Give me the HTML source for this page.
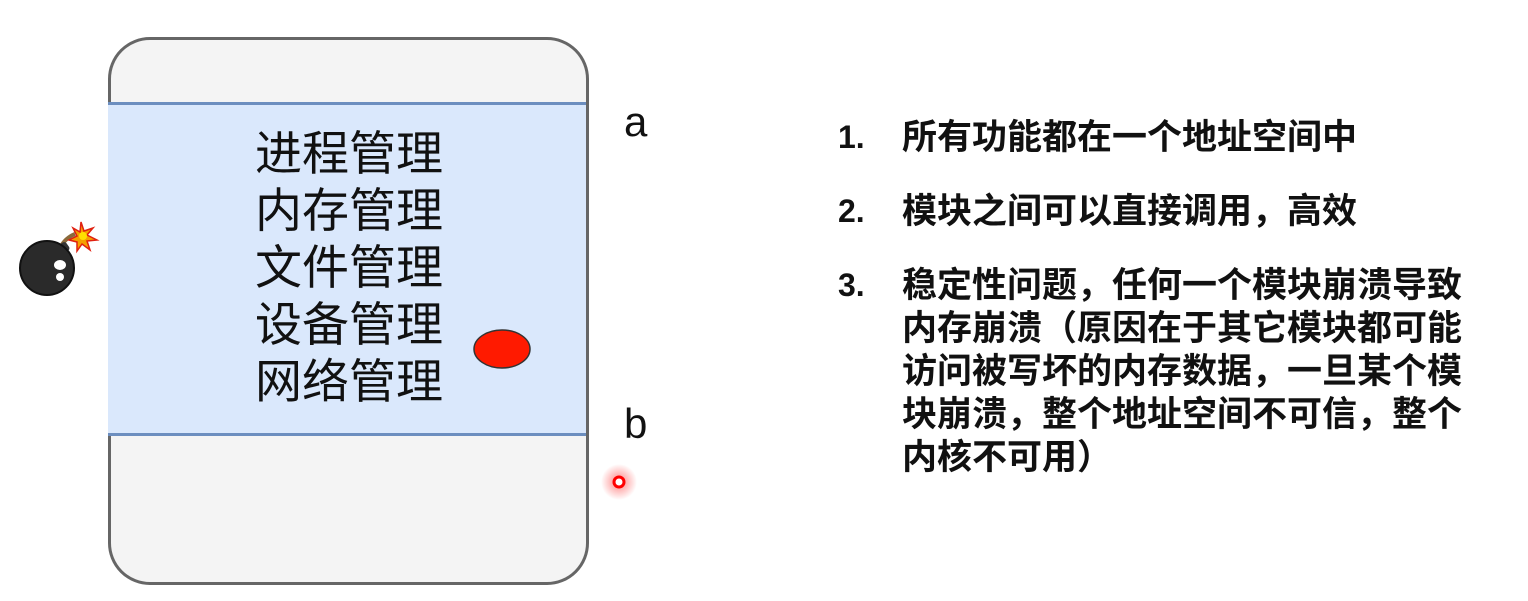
<!DOCTYPE html>
<html><head><meta charset="utf-8"><style>
body{margin:0;width:1528px;height:601px;background:#fff;position:relative;overflow:hidden;font-family:"Liberation Sans","Noto Sans CJK SC",sans-serif}
.outer{position:absolute;left:108px;top:37px;width:475px;height:542px;border:3px solid #666;border-radius:42px;background:#f4f4f4;overflow:hidden}
.band{position:absolute;left:108px;top:102px;width:478px;height:328px;background:#dae8fc;border-top:3px solid #6c8ebf;border-bottom:3px solid #6c8ebf;box-sizing:content-box}
.mods{position:absolute;left:199px;width:300px;top:125px;text-align:center;font-size:47px;line-height:57px;color:#111}
.lbl{position:absolute;font-size:42px;color:#111}
.list{position:absolute;left:838px;top:116px;width:660px;font-weight:bold;font-size:35px;color:#111}
.it{display:flex;margin-bottom:31px;line-height:43px}
.n{width:64px;flex:none;font-size:32px}
.t{width:570px}
</style></head><body>
<div class="outer"></div>
<div class="band"></div>
<div class="mods">进程管理<br>内存管理<br>文件管理<br>设备管理<br>网络管理</div>
<svg style="position:absolute;left:473px;top:328px" width="60" height="42"><ellipse cx="29" cy="21" rx="28" ry="19" fill="#ff1a00" stroke="#333" stroke-width="1.5"/></svg>
<div class="lbl" style="left:624px;top:98px">a</div>
<div class="lbl" style="left:624px;top:400px">b</div>
<svg style="position:absolute;left:600px;top:462px" width="40" height="40"><defs><radialGradient id="g"><stop offset="0" stop-color="#ff3030" stop-opacity=".6"/><stop offset="1" stop-color="#ff3030" stop-opacity="0"/></radialGradient></defs><circle cx="19" cy="20" r="18" fill="url(#g)"/><circle cx="19" cy="20" r="5" fill="#fff" stroke="#f00" stroke-width="3"/></svg>
<svg style="position:absolute;left:15px;top:218px" width="90" height="82">
<path d="M45 30 Q50 20 60 16" stroke="#8b6a3a" stroke-width="4" fill="none"/>
<polygon points="66,4 69,13 78,10 72,17 82,22 72,23 75,32 67,26 62,33 62,24 54,22 62,18 58,10 65,14" fill="#f5a000" stroke="#e02010" stroke-width="1.5"/>
<circle cx="68" cy="18" r="4" fill="#ffe000"/>
<rect x="40" y="26" width="14" height="10" rx="3" transform="rotate(-35 47 31)" fill="#333"/>
<circle cx="32" cy="50" r="27" fill="#2a2a2a" stroke="#111" stroke-width="2"/>
<ellipse cx="45" cy="47" rx="6" ry="5" fill="#fff"/><circle cx="45" cy="59" r="4" fill="#fff"/>
</svg>
<div class="list">
<div class="it"><span class="n">1.</span><span class="t">所有功能都在一个地址空间中</span></div>
<div class="it"><span class="n">2.</span><span class="t">模块之间可以直接调用，高效</span></div>
<div class="it"><span class="n">3.</span><span class="t">稳定性问题，任何一个模块崩溃导致<br>内存崩溃（原因在于其它模块都可能<br>访问被写坏的内存数据，一旦某个模<br>块崩溃，整个地址空间不可信，整个<br>内核不可用）</span></div>
</div>
</body></html>
